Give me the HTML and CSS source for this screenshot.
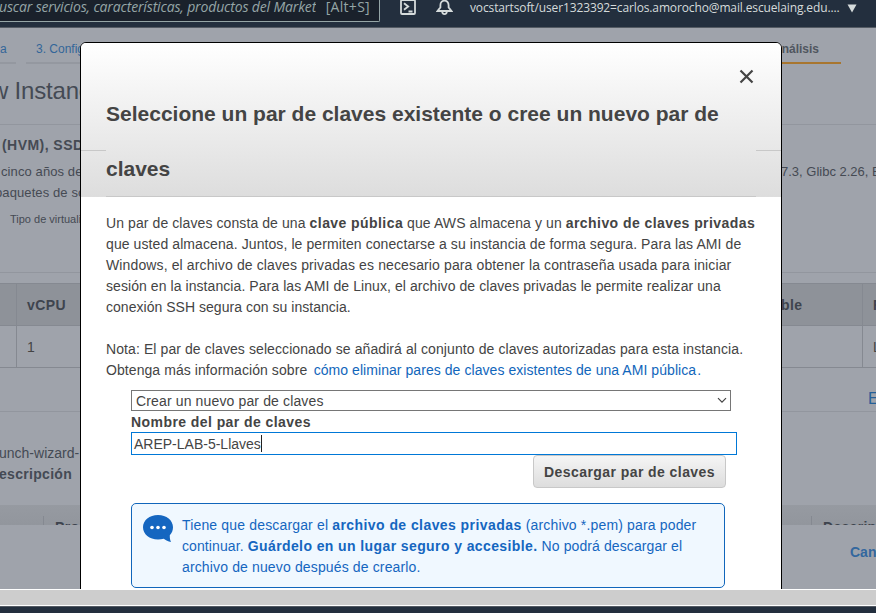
FILE: index.html
```
<!DOCTYPE html>
<html lang="es">
<head>
<meta charset="utf-8">
<title>EC2</title>
<link rel="stylesheet" href="styles.css">
</head>
<body>
<header class="top">
  <div class="search"><span class="query">uscar servicios, características, productos del Market</span><span class="key">[Alt+S]</span></div>
  <svg class="shell" width="16" height="18" viewBox="0 0 16 18" fill="none" stroke="#d5dbdb" stroke-width="1.8"><rect x="1" y="0" width="14" height="14" rx="1"/><path d="M4 3.2l4.200 3.300L4 9.800M8.500 11.500h4"/></svg>
  <svg class="bell" width="17" height="18" viewBox="0 0 17 18" fill="none" stroke="#d5dbdb" stroke-width="1.8"><path d="M1.500 11h14l-2.900-3.600V5.200a4.100 4.600 0 0 0-8.200 0v2.200zM6.200 11.500a2.300 2.600 0 0 0 4.600 0"/></svg>
  <span class="user">vocstartsoft/user1323392=carlos.amorocho@mail.escuelaing.edu....</span>
  <svg class="caret" width="10" height="9" viewBox="0 0 10 9"><path d="M0.500 0.500h9L5 8.500z" fill="#d5dbdb"/></svg>
</header>
<main class="page">
  <nav class="tabs"><span class="tab first">a</span><span class="tab second">3. Configurar</span><span class="tab current">nálisis</span></nav>
  <h1 class="title">w Instance</h1>
  <section class="ami">
    <h2>(HVM), SSD</h2>
    <div class="pair"><span>cinco años de</span><span class="glibc">7.3, Glibc 2.26, B</span></div>
    <div class="packages">paquetes de so</div>
    <div class="virt">Tipo de virtuali</div>
  </section>
  <section class="specs">
    <div class="row head"><span></span><span>vCPU</span><span>ble</span><span>R</span></div>
    <div class="row"><span></span><span>1</span><span></span><span>L</span></div>
  </section>
  <div class="edit">E</div>
  <section class="group">
    <div>unch-wizard-</div>
    <b>escripción</b>
  </section>
  <div class="rules"><span class="from">Pro</span><span class="desc">Descrip</span></div>
  <footer class="actions">Can</footer>

  <div class="modal">
    <div class="modal-head">
      <svg class="close" width="15" height="15" viewBox="0 0 15 15" stroke="#444" stroke-width="2.200"><path d="M1.500 1.500l12 12M13.500 1.500l-12 12"/></svg>
      <h3>Seleccione un par de claves existente o cree un nuevo par de<br>claves</h3>
    </div>
    <div class="modal-body">
      <p><span class="l1">Un par de claves consta de una <b>clave pública</b> que AWS almacena y un <b>archivo de claves privadas</b></span><br>
      <span class="l2">que usted almacena. Juntos, le permiten conectarse a su instancia de forma segura. Para las AMI de</span><br>
      <span class="l3">Windows, el archivo de claves privadas es necesario para obtener la contraseña usada para iniciar</span><br>
      <span class="l4">sesión en la instancia. Para las AMI de Linux, el archivo de claves privadas le permite realizar una</span><br>
      <span class="l5">conexión SSH segura con su instancia.</span></p>
      <p><span class="l6">Nota: El par de claves seleccionado se añadirá al conjunto de claves autorizadas para esta instancia.</span><br>
      <span class="l7">Obtenga más información sobre</span> <a>cómo eliminar pares de claves existentes de una AMI pública</a><i class="dot">.</i></p>
      <div class="form">
        <div class="select"><span>Crear un nuevo par de claves</span><svg width="10" height="7" viewBox="0 0 10 7" fill="none" stroke="#444" stroke-width="1.200"><path d="M1 1.200l4 4 4-4"/></svg></div>
        <label>Nombre del par de claves</label>
        <div class="input"><span>AREP-LAB-5-Llaves</span></div>
        <div class="button">Descargar par de claves</div>
        <div class="info">
          <svg width="30" height="28" viewBox="0 0 30 28"><path d="M15 0C6.500 0 0 5.300 0 12.300S6.500 24.500 15 24.500c2 0 4-.3 5.700-.8 2 1.500 4.500 2.700 7.300 3.300-.9-1.900-1.300-4-1.200-6.700 2-2.100 3.200-4.900 3.200-8C30 5.300 23.500 0 15 0z" fill="#1566c0"/><g fill="#fff"><circle cx="9" cy="12.500" r="1.800"/><circle cx="15" cy="12.500" r="1.800"/><circle cx="21" cy="12.500" r="1.800"/></g></svg>
          <div><span class="i1">Tiene que descargar el <b>archivo de claves privadas</b> (archivo *.pem) para poder</span><br><span class="i2">continuar. <b>Guárdelo en un lugar seguro y accesible.</b> No podrá descargar el</span><br><span class="i3">archivo de nuevo después de crearlo.</span></div>
        </div>
      </div>
    </div>
  </div>
</main>
<div class="scrollbar"></div>
<div class="bottom"></div>
</body>
</html>
```
FILE: styles.css
```
* { box-sizing: border-box; }
body { margin: 0; width: 876px; height: 613px; overflow: hidden; background: #fff; color: #444; font: 14px/21px "Liberation Sans", Arial, sans-serif; white-space: nowrap; }
.top { height: 28px; background: #232f3e; border-bottom: 1px solid #545b64; display: flex; align-items: flex-start; color: #d5dbdb; font-family: "Open Sans", "Noto Sans", sans-serif; }
.search { width: 380px; height: 22px; border: solid #95a5a6; border-width: 0 1px 1px 0; border-radius: 0 0 2px 0; background: #1a212b; display: flex; justify-content: space-between; padding-right: 9px; color: #95a5a6; line-height: 14px; }
.query { width: 317px; overflow: hidden; font-style: italic; margin-left: -1px; height: 20px; letter-spacing: -0.15px; }
.key { letter-spacing: 0.3px; }
.shell { margin-left: 20px; }
.bell { margin-left: 20px; }
.user { margin-left: 17px; font-size: 12px; line-height: 16px; width: 370px; letter-spacing: -0.13px; }
.caret { margin: 4px 0 0 7px; }
.page { position: relative; height: 561px; background: #9fa3ab; overflow: hidden; }
.tabs { display: flex; height: 36px; font-size: 12px; line-height: 42px; color: #336699; }
.tab { border-bottom: 2px solid #9498a0; height: 36px; }
.first { width: 16px; }
.second { margin-left: 10px; padding-left: 10px; width: 200px; }
.current { margin-left: auto; margin-right: 35px; padding-right: 22px; font-weight: bold; color: #50565f; border-color: #a8762f; }
.title { margin: 0 0 0 -9px; height: 60px; font-size: 24px; line-height: 54px; font-weight: normal; color: #444a54; letter-spacing: -0.2px; }
.ami { height: 149px; border: solid #92969e; border-width: 1px 0; padding-top: 10px; color: #454a53; font-size: 13px; letter-spacing: 0.1px; }
.ami h2 { margin: 0 0 5px 2px; font-size: 14px; line-height: 21px; letter-spacing: 0.45px; }
.pair { display: flex; justify-content: space-between; }
.pair span:first-child { margin-left: 1px; }
.glibc { width: 95px; letter-spacing: 0; }
.packages { margin-left: -5px; }
.virt { margin: 6px 0 0 10px; font-size: 11px; line-height: 20px; letter-spacing: 0; }
.specs { margin-top: 10px; border: solid #858991; border-width: 1px 0; }
.row { display: grid; grid-template-columns: 17px 763px 82px 14px; height: 41px; line-height: 42px; }
.row span { padding-left: 10px; border-left: 1px solid #858991; overflow: hidden; }
.row span:first-child { border-left: 0; border-right: 1px solid #858991; padding: 0; }
.row span:nth-child(2) { border: 0; }
.row span:nth-child(3) { border: 0; padding-left: 1px; }
.head { background: #8e9299; font-weight: bold; border-bottom: 1px solid #858991; height: 42px; font-size: 14px; letter-spacing: 0.4px; color: #3e444e; }
.edit { height: 44px; line-height: 62px; padding-left: 868px; border-bottom: 1px solid #92969e; color: #245f98; font-size: 16px; }
.group { height: 93px; padding-top: 31px; color: #444a54; }
.group div { margin-left: -1px; }
.group b { margin-left: -1px; letter-spacing: 0.3px; }
.rules { height: 20px; background: linear-gradient(#969aa1, #92969d); overflow: hidden; display: flex; justify-content: space-between; font-weight: bold; color: #3e444e; letter-spacing: 0.3px; }
.rules span { border-left: 1px solid #858991; padding-left: 11px; margin-top: 11px; line-height: 22px; }
.from { margin-left: 43px; }
.desc { width: 65px; }
.actions { padding-left: 850px; line-height: 54px; font-weight: bold; color: #33679e; font-size: 14px; }
.modal { position: absolute; left: 80px; top: 14px; width: 702px; height: 620px; background: #fff; border: 1px solid #000; border-radius: 6px; overflow: hidden; }
.modal-head { height: 154px; padding: 0 25px; display: flex; flex-direction: column; background-image: linear-gradient(#c8c8c8, #c8c8c8), linear-gradient(#c8c8c8, #c8c8c8), linear-gradient(#c8c8c8, #c8c8c8), linear-gradient(#fff, #ddd); background-size: 25px 1px, 25px 1px, 650px 1px, 100% 100%; background-position: 0 107px, 675px 107px, 25px 153px, 0 0; background-repeat: no-repeat; }
.close { margin: 26px 2px 0 auto; flex: none; }
h3 { margin: 2px 0 0; font-size: 21px; line-height: 55px; color: #444; }
.modal-body { padding: 16px 25px; }
.modal-body b, label, .button { letter-spacing: 0.43px; }
p { margin: 0 0 21px; }
p + p { margin-bottom: 9px; }
.l2, .l6 { letter-spacing: 0.09px; }
.l1 { letter-spacing: 0.09px; }
.l3 { letter-spacing: 0.125px; }
.l4, .l7 { letter-spacing: 0.07px; }
.l5 { letter-spacing: 0.03px; }
a { color: #1166bb; margin-left: 2.5px; letter-spacing: 0.06px; }
.dot { font-style: normal; color: #1166bb; margin-left: 1px; }
.form { margin-left: 25px; width: 606px; display: flex; flex-direction: column; align-items: flex-start; }
.select { width: 600px; height: 21px; line-height: 20px; border: 1px solid #767676; display: flex; justify-content: space-between; align-items: center; padding: 0 3px 0 4px; letter-spacing: 0.14px; }
label { font-weight: bold; height: 21px; line-height: 22px; }
.input { width: 606px; height: 23px; border: 1px solid #0078d7; padding: 2px; display: flex; }
.input span { border-right: 1px solid #222; height: 17px; line-height: 19px; }
.button { align-self: flex-end; margin: 0 11px 0 0; width: 193px; height: 33px; line-height: 32px; text-align: center; font-weight: bold; border: 1px solid #c8c8c8; border-radius: 4px; background: linear-gradient(#f5f5f5, #ddd); }
.info { margin-top: 15px; width: 594px; height: 85px; border: 1px solid #1166bb; border-radius: 5px; background: #f0f8ff; color: #1566c0; display: flex; padding: 11px; gap: 9px; }
.i1 { letter-spacing: 0.16px; }
.i2 { letter-spacing: 0.1px; }
.i3 { letter-spacing: 0.14px; }
.i2 b { letter-spacing: 0.4px; }
.scrollbar { height: 17px; background: #cdcdcd; border: solid #fff; border-width: 1px 0; }
.bottom { height: 7px; background: #232f3e; border-top: 1px solid #545b64; }
```
